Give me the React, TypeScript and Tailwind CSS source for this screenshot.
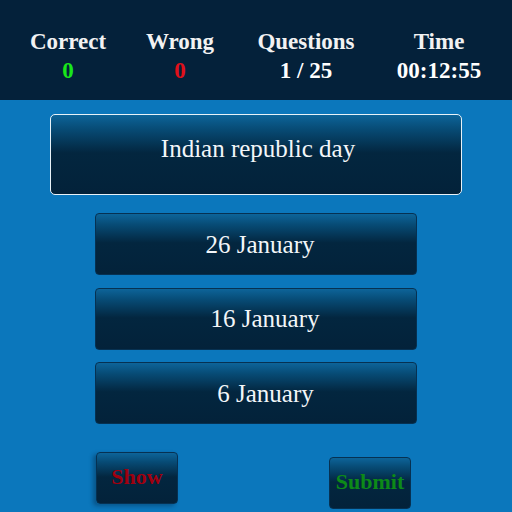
const SERIF = "font-['Liberation_Serif','Times_New_Roman',serif]";

const STATS = [
  { label: 'Correct', value: '0', color: 'text-[#19e619]' },
  { label: 'Wrong', value: '0', color: 'text-[#e0101a]' },
  { label: 'Questions', value: '1 / 25', color: 'text-white' },
  { label: 'Time', value: '00:12:55', color: 'text-white' },
];

// answer labels sit a little right of centre in the original
const OPTIONS = [
  { text: '26 January', pad: 'pl-[8px]' },
  { text: '16 January', pad: 'pl-[18px]' },
  { text: '6 January', pad: 'pl-[19px]' },
];

const glossy =
  'bg-[linear-gradient(to_bottom,#0d6499_0%,#074b75_18%,#03263f_48%,#03223a_100%)]';

export default function App() {
  return (
    <div className={`w-[512px] h-[512px] overflow-hidden bg-[#0b77bc] ${SERIF}`}>
      {/* Score bar */}
      <div className="h-[100px] bg-[#04213a] px-3 pt-[27px] grid grid-cols-[112px_112px_140px_126px]">
        {STATS.map((s) => (
          <div key={s.label} className="flex flex-col items-center font-bold text-[23px] leading-[29px]">
            <span className="text-[#f2f2f2]">{s.label}</span>
            <span className={s.color}>{s.value}</span>
          </div>
        ))}
      </div>

      {/* Question */}
      <div
        className={`mx-[50px] mt-[14px] h-[81px] rounded-[5px] border border-[#e8f2f8] ${glossy} flex items-center justify-center pb-[12px] pl-[4px] text-[25px] text-[#f2f6f9]`}
      >
        Indian republic day
      </div>

      {/* Answers */}
      <div className="mt-[18px] flex flex-col gap-[12.5px] items-center">
        {OPTIONS.map((o) => (
          <button
            key={o.text}
            className={`w-[322px] h-[62px] rounded-[4px] border border-[#063152] ${glossy} ${o.pad} text-[25px] text-[#f2f6f9] flex items-center justify-center pt-[1px]`}
          >
            {o.text}
          </button>
        ))}
      </div>

      {/* Actions */}
      <div className="mt-[28px] pl-[96px] flex items-start gap-[151px]">
        <button
          className={`w-[82px] h-[52px] rounded-[4px] border border-[#063152] ${glossy} pb-[4px] font-bold text-[22px] text-[#a0000f] flex items-center justify-center shadow-[-3px_2px_4px_rgba(0,20,40,0.35)]`}
        >
          Show
        </button>
        <button
          className={`mt-[5px] w-[82px] h-[52px] rounded-[4px] border border-[#063152] ${glossy} pb-[4px] font-bold text-[22px] text-[#0d8a18] flex items-center justify-center`}
        >
          Submit
        </button>
      </div>
    </div>
  );
}
